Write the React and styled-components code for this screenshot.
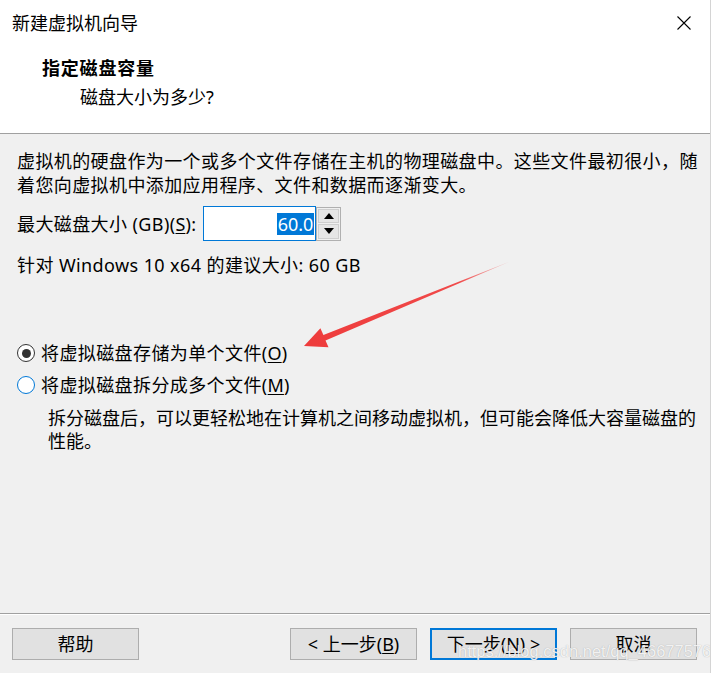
import React from "react";
import styled, { createGlobalStyle } from "styled-components";

const FONT = `"Noto Sans", "Noto Sans CJK SC", sans-serif`;

const Global = createGlobalStyle`
  html, body { margin: 0; padding: 0; background: #fff; }
  body { font-family: ${FONT}; }
  * { box-sizing: border-box; }
`;

const Window = styled.div`
  position: relative;
  width: 711px;
  height: 673px;
  border-right: 1px solid #d4d4d4;
  background: #f0f0f0;
  display: flex;
  flex-direction: column;
  font-family: ${FONT};
  color: #000;
  overflow: hidden;
`;

const Header = styled.header`
  height: 134px;
  flex: none;
  background: #fff;
  border-bottom: 1px solid #a0a0a0;
  display: flex;
  flex-direction: column;
`;

const TitleBar = styled.div`
  height: 46px;
  display: flex;
  align-items: center;
  justify-content: space-between;
  padding: 0 19px 0 12px;
`;

const Title = styled.div`
  font-size: 18px;
  line-height: 24px;
`;

const Heading = styled.div`
  margin: 10px 0 0 42px;
  font-size: 18px;
  line-height: 24px;
  font-weight: 700;
  letter-spacing: 0.8px;
`;

const SubHeading = styled.div`
  margin: 5px 0 0 80px;
  font-size: 18px;
  line-height: 24px;
`;

const Body = styled.main`
  flex: 1;
  padding: 15px 0 0 17px;
  font-size: 18px;
  letter-spacing: 0.4px;
  white-space: nowrap;
`;

const Para = styled.p`
  margin: 0;
  line-height: 24px;
`;

const SizeRow = styled.div`
  margin-top: 9px;
  display: flex;
  align-items: center;
  height: 35px;
`;

const Label = styled.span`
  line-height: 24px;
  margin-right: 7px;
`;

const Key = styled.u`
  text-decoration: underline;
  text-underline-offset: 2px;
  letter-spacing: 0;
`;

const NumberBox = styled.div`
  width: 113px;
  height: 35px;
  background: #fff;
  border: 1px solid #0078d7;
  display: flex;
  align-items: center;
  justify-content: flex-end;
  padding-right: 1px;
`;

const Selected = styled.span`
  background: #0078d7;
  color: #fff;
  font-size: 18px;
  line-height: 22px;
  letter-spacing: 0;
  padding: 0 1px;
`;

const Spinner = styled.div`
  width: 25px;
  height: 34px;
  border: 1px solid #b0b0b0;
  background: #f0f0f0;
  display: flex;
  flex-direction: column;
  padding: 1px;
  gap: 1px;
`;

const SpinButton = styled.div`
  flex: 1;
  background: #e6e6e6;
  border: 1px solid #cfcfcf;
  display: flex;
  align-items: center;
  justify-content: center;
`;

const Hint = styled.p`
  margin: 12px 0 0;
  line-height: 24px;
`;

const RadioRow = styled.label`
  display: flex;
  align-items: center;
  gap: 6px;
  height: 24px;
  margin-top: ${(p) => p.$top}px;
  line-height: 24px;
`;

const Circle = styled.span`
  width: 18px;
  height: 18px;
  border-radius: 50%;
  border: 1px solid ${(p) => (p.$checked ? "#333" : "#0078d7")};
  background: #fff;
  display: flex;
  align-items: center;
  justify-content: center;
  &::after {
    content: "";
    width: 9px;
    height: 9px;
    border-radius: 50%;
    background: ${(p) => (p.$checked ? "#333" : "transparent")};
  }
`;

const Desc = styled.p`
  margin: 10px 0 0 31px;
  line-height: 23px;
  letter-spacing: 0;
`;

const Footer = styled.footer`
  flex: none;
  height: 60px;
  border-top: 1px solid #a0a0a0;
  box-shadow: inset 0 1px 0 #fff;
  display: flex;
  align-items: flex-start;
  padding: 14px 13px 0 12px;
`;

const Spacer = styled.div`
  flex: 1;
`;

const ButtonGroup = styled.div`
  display: flex;
  gap: 13px;
`;

const Button = styled.div`
  width: 127px;
  height: 32px;
  background: #e1e1e1;
  border: ${(p) => (p.$primary ? "2px solid #0078d7" : "1px solid #adadad")};
  display: flex;
  align-items: center;
  justify-content: center;
  font-size: 18px;
  line-height: 24px;
`;

const Overlay = styled.svg`
  position: absolute;
  left: 0;
  top: 0;
  pointer-events: none;
`;

const Watermark = styled.div`
  position: absolute;
  left: 458px;
  top: 641px;
  font-family: "Liberation Sans", Arial, sans-serif;
  font-size: 16.5px;
  line-height: 20px;
  color: rgba(255, 255, 255, 0.85);
  text-shadow: 0 0 1px rgba(120, 120, 120, 0.6);
  pointer-events: none;
`;

export default function App() {
  return (
    <>
      <Global />
      <Window>
        <Header>
          <TitleBar>
            <Title>新建虚拟机向导</Title>
            <svg width="14" height="14" viewBox="0 0 14 14">
              <path d="M0.5 0.5 L13.5 13.5 M13.5 0.5 L0.5 13.5" stroke="#000" strokeWidth="1.1" fill="none" />
            </svg>
          </TitleBar>
          <Heading>指定磁盘容量</Heading>
          <SubHeading>磁盘大小为多少?</SubHeading>
        </Header>

        <Body>
          <Para>
            虚拟机的硬盘作为一个或多个文件存储在主机的物理磁盘中。这些文件最初很小，随
            <br />
            着您向虚拟机中添加应用程序、文件和数据而逐渐变大。
          </Para>

          <SizeRow>
            <Label>
              最大磁盘大小 (GB)(<Key>S</Key>):
            </Label>
            <NumberBox>
              <Selected>60.0</Selected>
            </NumberBox>
            <Spinner>
              <SpinButton>
                <svg width="10" height="6" viewBox="0 0 10 6">
                  <path d="M0 6 L5 0 L10 6 Z" fill="#000" />
                </svg>
              </SpinButton>
              <SpinButton>
                <svg width="10" height="6" viewBox="0 0 10 6">
                  <path d="M0 0 L10 0 L5 6 Z" fill="#000" />
                </svg>
              </SpinButton>
            </Spinner>
          </SizeRow>

          <Hint>针对 Windows 10 x64 的建议大小: 60 GB</Hint>

          <RadioRow $top={64}>
            <Circle $checked />
            <span>
              将虚拟磁盘存储为单个文件(<Key>O</Key>)
            </span>
          </RadioRow>
          <RadioRow $top={8}>
            <Circle />
            <span>
              将虚拟磁盘拆分成多个文件(<Key>M</Key>)
            </span>
          </RadioRow>
          <Desc>
            拆分磁盘后，可以更轻松地在计算机之间移动虚拟机，但可能会降低大容量磁盘的
            <br />
            性能。
          </Desc>
        </Body>

        <Footer>
          <Button>帮助</Button>
          <Spacer />
          <ButtonGroup>
            <Button>
              &lt; 上一步(<Key>B</Key>)
            </Button>
            <Button $primary>
              下一步(<Key>N</Key>) &gt;
            </Button>
            <Button>取消</Button>
          </ButtonGroup>
        </Footer>

        <Overlay width="712" height="673" viewBox="0 0 712 673">
          <defs>
            <linearGradient id="arrowGrad" x1="511" y1="261" x2="304" y2="346" gradientUnits="userSpaceOnUse">
              <stop offset="0" stopColor="#f26a6a" stopOpacity="0.3" />
              <stop offset="0.25" stopColor="#f04a4a" />
              <stop offset="1" stopColor="#ee3b3b" />
            </linearGradient>
          </defs>
          <polygon
            points="511,261 325.5,340.6 328.5,347.2 304,346 320.4,328.2 323.4,334.9"
            fill="url(#arrowGrad)"
          />
        </Overlay>
        <Watermark>https://blog.csdn.net/qq_46677576</Watermark>
      </Window>
    </>
  );
}
